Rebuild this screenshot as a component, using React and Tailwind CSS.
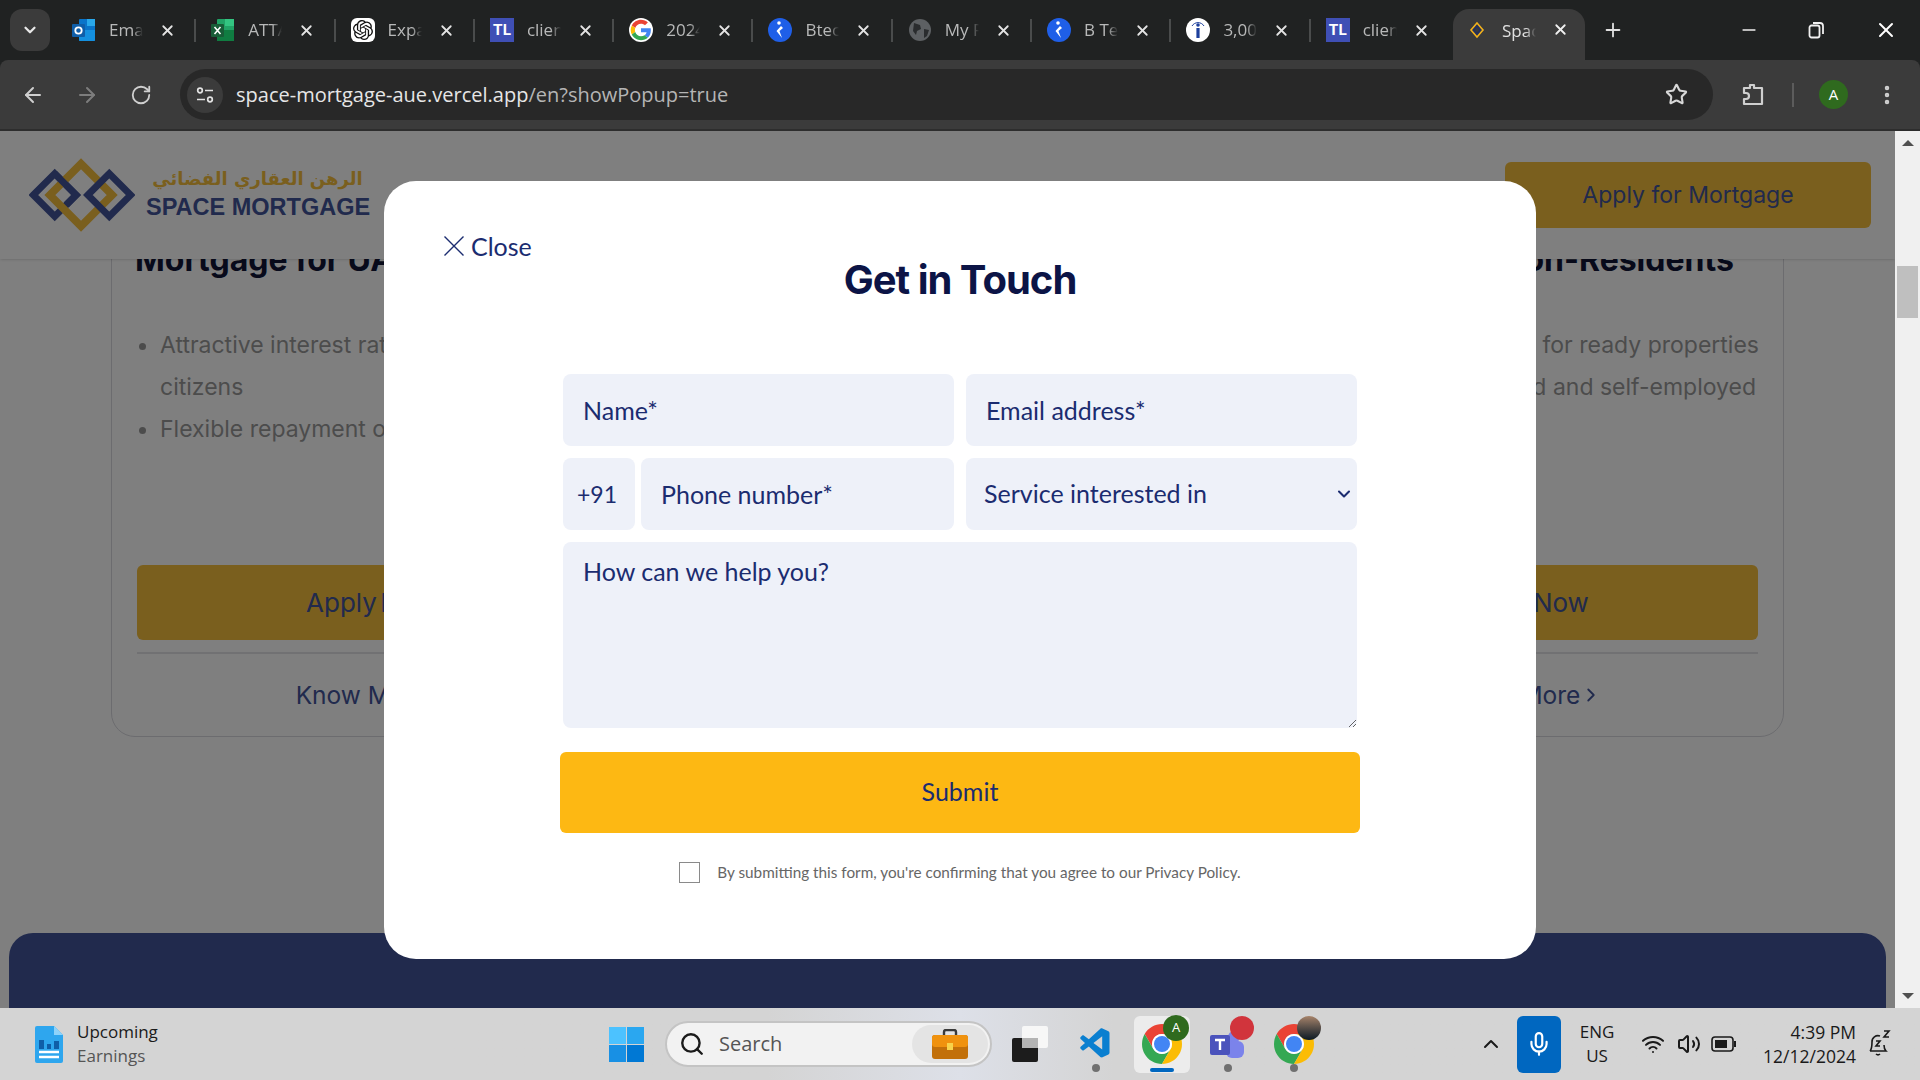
import React from 'react';
import {
  ArrowLeft, ArrowRight, RotateCw, Star, EllipsisVertical, ChevronDown, ChevronRight, ChevronUp,
  X, Plus, Minus, Search, Mic, Wifi, Volume2,
} from 'lucide-react';
import { SiOpenai } from 'react-icons/si';
import { VscVscode } from 'react-icons/vsc';

const ui = { fontFamily: '"Open Sans", "Noto Sans", sans-serif' };
const site = { fontFamily: 'Inter, "Noto Sans", sans-serif' };
const form = { fontFamily: 'Lato, "Noto Sans", sans-serif' };

function Outlook() {
  return (
    <svg width="24" height="24" viewBox="0 0 24 24">
      <rect x="7" y="1" width="16" height="22" rx="1" fill="#0a74c9" />
      <rect x="15" y="1" width="8" height="7" fill="#29a8ea" />
      <path d="M7 12l16 0v10a1 1 0 0 1-1 1H8a1 1 0 0 1-1-1z" fill="#1490df" />
      <rect x="0" y="6" width="13" height="13" rx="1" fill="#0f5ea8" />
      <circle cx="6.5" cy="12.5" r="3.2" fill="none" stroke="#fff" strokeWidth="1.8" />
    </svg>
  );
}

function Excel() {
  return (
    <svg width="24" height="24" viewBox="0 0 24 24">
      <rect x="6" y="1" width="17" height="22" rx="1" fill="#21a366" />
      <rect x="14" y="1" width="9" height="7" fill="#33c481" />
      <rect x="6" y="12" width="17" height="11" fill="#107c41" />
      <rect x="0" y="6" width="13" height="13" rx="1" fill="#185c37" />
      <path d="M3.5 9l6 7M9.5 9l-6 7" stroke="#fff" strokeWidth="1.6" />
    </svg>
  );
}

function OpenAi() {
  return (
    <div className="w-6 h-6 rounded-md bg-white flex items-center justify-center">
      <SiOpenai size={20} color="#111" />
    </div>
  );
}

function Tl() {
  return (
    <div className="w-6 h-6 bg-[#3f4fb5] flex items-center justify-center text-white text-[15px] font-bold" style={site}>
      TL
    </div>
  );
}

function Google() {
  return (
    <svg width="24" height="24" viewBox="-4 -4 56 56" className="rounded-full bg-white">
      <path fill="#EA4335" d="M24 9.5c3.54 0 6.71 1.22 9.21 3.6l6.85-6.85C35.9 2.38 30.47 0 24 0 14.62 0 6.51 5.38 2.56 13.22l7.98 6.19C12.43 13.72 17.74 9.5 24 9.5z" />
      <path fill="#4285F4" d="M46.98 24.55c0-1.57-.15-3.09-.38-4.55H24v9.02h12.94c-.58 2.96-2.26 5.48-4.78 7.18l7.73 6c4.51-4.18 7.09-10.36 7.09-17.65z" />
      <path fill="#FBBC05" d="M10.53 28.59c-.48-1.45-.76-2.99-.76-4.59s.27-3.14.76-4.59l-7.98-6.19C.92 16.46 0 20.12 0 24c0 3.88.92 7.54 2.56 10.78l7.97-6.19z" />
      <path fill="#34A853" d="M24 48c6.48 0 11.93-2.13 15.89-5.81l-7.73-6c-2.15 1.45-4.92 2.3-8.16 2.3-6.26 0-11.57-4.22-13.47-9.91l-7.98 6.19C6.51 42.62 14.62 48 24 48z" />
    </svg>
  );
}

function BlueK() {
  return (
    <svg width="24" height="24" viewBox="0 0 24 24">
      <circle cx="12" cy="12" r="12" fill="#1f5fe8" />
      <circle cx="11" cy="5" r="1.8" fill="#fff" />
      <path d="M13 8l-4.500 5 5.500 7-2.500-7 3.500-3z" fill="#fff" />
    </svg>
  );
}

function Globe() {
  return (
    <svg width="24" height="24" viewBox="0 0 24 24">
      <circle cx="12" cy="12" r="11" fill="#5d6063" />
      <path d="M6 5l6 2 1 4-4 2-1 4-3-4zM16 11l5 1-2 6-3 2z" fill="#2a2c2e" />
    </svg>
  );
}

function InfoIcon() {
  return (
    <svg width="24" height="24" viewBox="0 0 24 24">
      <circle cx="12" cy="12" r="12" fill="#fff" />
      <circle cx="12" cy="7" r="1.8" fill="#1d3f9c" />
      <rect x="10.400" y="10" width="3.200" height="10" fill="#1d3f9c" />
      <path d="M6 8a7 7 0 0 1 12 0" fill="none" stroke="#1d3f9c" strokeWidth="1" />
    </svg>
  );
}

function SpaceFav() {
  return (
    <svg width="24" height="24" viewBox="0 0 24 24">
      <path d="M12 5l6 7-6 7-6-7z" fill="#23305c" stroke="#f2b21b" strokeWidth="1.6" />
      <path d="M12 9.500l2.200 2.500-2.200 2.500-2.200-2.500z" fill="#3b3b3b" />
    </svg>
  );
}

const tabs = [
  { icon: <Outlook />, title: 'Email' },
  { icon: <Excel />, title: 'ATTACH' },
  { icon: <OpenAi />, title: 'Expand' },
  { icon: <Tl />, title: 'clients' },
  { icon: <Google />, title: '2024' },
  { icon: <BlueK />, title: 'Btech' },
  { icon: <Globe />, title: 'My Page' },
  { icon: <BlueK />, title: 'B Tech' },
  { icon: <InfoIcon />, title: '3,000' },
  { icon: <Tl />, title: 'clients' },
];

function Tab({ icon, title, last }) {
  return (
    <div className="w-[139.3px] h-[42px] flex items-center pl-[15px] relative shrink-0">
      <div className="w-6 h-6 shrink-0">{icon}</div>
      <div className="ml-[13px] w-[34px] overflow-hidden whitespace-nowrap text-[17px] text-[#b8b9b9] [mask-image:linear-gradient(to_right,black_70%,transparent)]">
        {title}
      </div>
      <X size={17} strokeWidth={2.5} color="#e3e3e3" className="ml-[16px] shrink-0" />
      {!last && <div className="absolute right-0 top-[10px] w-[2px] h-[23px] bg-[#4a4c4c]" />}
    </div>
  );
}

function TabStrip() {
  return (
    <div className="h-[60px] bg-[#202222] flex items-start pt-[9px] shrink-0" style={ui}>
      <div className="ml-[10px] w-10 h-[42px] rounded-xl bg-[#3b3b3b] flex items-center justify-center">
        <ChevronDown size={18} strokeWidth={3} color="#e8e8e8" />
      </div>
      <div className="ml-[7px] flex">
        {tabs.map((t, i) => (
          <Tab key={i} icon={t.icon} title={t.title} last={i === tabs.length - 1} />
        ))}
      </div>
      <div className="ml-[3px] w-[132px] h-[51px] rounded-t-2xl bg-[#3b3b3b] flex items-start pt-[9px] pl-[12px] shrink-0">
        <div className="w-6 h-6 shrink-0"><SpaceFav /></div>
        <div className="ml-[13px] w-[34px] overflow-hidden whitespace-nowrap text-[17px] text-[#e0e0e0] [mask-image:linear-gradient(to_right,black_70%,transparent)]">
          Space
        </div>
        <X size={17} strokeWidth={2.5} color="#f0f0f0" className="ml-[16px] mt-[3px] shrink-0" />
      </div>
      <Plus size={22} color="#e0e0e0" className="ml-[17px] mt-[10px] shrink-0" />
      <Minus size={20} color="#f0f0f0" className="ml-[115px] mt-[11px] shrink-0" />
      <svg width="20" height="20" viewBox="0 0 20 20" className="ml-[47px] mt-[11px] shrink-0" fill="none" stroke="#f0f0f0" strokeWidth="1.800">
        <rect x="3.500" y="5.500" width="10" height="12" rx="2" />
        <path d="M7 3h7a3 3 0 0 1 3 3v8" />
      </svg>
      <X size={24} color="#ffffff" className="ml-[48px] mt-[9px] shrink-0" />
    </div>
  );
}

function Toolbar() {
  return (
    <div className="h-[71px] bg-[#3b3b3b] border-b-2 border-[#2d2d2d] flex items-center shrink-0 rounded-t-lg" style={ui}>
      <ArrowLeft size={24} color="#cfcfcf" className="ml-[21px] shrink-0" />
      <ArrowRight size={24} color="#7d7d7d" className="ml-[30px] shrink-0" />
      <RotateCw size={22} color="#cfcfcf" className="ml-[31px] shrink-0" />
      <div className="ml-[28px] w-[1533px] h-[51px] rounded-full bg-[#282828] flex items-center pl-[7px] shrink-0">
        <div className="w-9 h-9 rounded-full bg-[#3b3b3b] flex items-center justify-center">
          <svg width="20" height="20" viewBox="0 0 20 20" fill="none" stroke="#e3e3e3" strokeWidth="1.700">
            <circle cx="5" cy="5.500" r="2.300" />
            <path d="M10 5.500h8M2 14.500h8" />
            <circle cx="15" cy="14.500" r="2.300" />
          </svg>
        </div>
        <div className="ml-[13px] text-[20px] text-[#e6e6e6] whitespace-nowrap">
          space-mortgage-aue.vercel.app<span className="text-[#b5b5b5]">/en?showPopup=true</span>
        </div>
        <Star size={23} strokeWidth={2.2} color="#d8d8d8" className="ml-auto mr-[25px] shrink-0" />
      </div>
      <svg width="26" height="26" viewBox="0 0 26 26" className="ml-[27px] shrink-0" fill="none" stroke="#cfcfcf" strokeWidth="2.200" strokeLinejoin="round">
        <path d="M4 6h6V3h4v3h8v16H4v-5h2a3 3 0 0 0 0-6H4z" />
      </svg>
      <div className="ml-[26px] w-[2px] h-[24px] bg-[#5c5c5c] shrink-0" />
      <div className="ml-[25px] w-[29px] h-[29px] rounded-full bg-[#2f6a1e] text-white text-[15px] flex items-center justify-center shrink-0">
        A
      </div>
      <EllipsisVertical size={24} strokeWidth={2.5} color="#cfcfcf" className="ml-[27px] shrink-0" />
    </div>
  );
}

function Logo() {
  return (
    <div className="flex items-center ml-[29px] -mt-1">
      <svg width="106" height="74" viewBox="0 0 108 76" className="shrink-0 mt-[3px]">
        <path d="M4 38L26 16 48 38 26 60z" fill="none" stroke="#42549a" strokeWidth="7" />
        <path d="M53 6L85 38 53 70 21 38z" fill="none" stroke="#f5be3c" strokeWidth="8" />
        <path d="M60 38L82 16 104 38 82 60z" fill="none" stroke="#42549a" strokeWidth="7" />
        <path d="M26 16L48 38 38 48" fill="none" stroke="#42549a" strokeWidth="7" />
      </svg>
      <div className="ml-[11px] w-[223px] flex flex-col">
        <div className="text-[18px] leading-[28px] font-bold text-[#f5be3c] text-center whitespace-nowrap" dir="rtl" style={{ fontFamily: '"DejaVu Sans", sans-serif' }}>
          الرهن العقاري الفضائي
        </div>
        <div className="text-[23.5px] leading-[28px] font-bold text-[#42549a] whitespace-nowrap" style={{ fontFamily: '"Liberation Sans", sans-serif' }}>
          SPACE MORTGAGE
        </div>
      </div>
    </div>
  );
}

function Card({ title, bullets }) {
  return (
    <div className="border border-[#d8d8de] rounded-b-3xl px-[25px] pt-[20px] h-[518px] flex flex-col">
      <h3 className="-ml-[2px] text-[32px] leading-10 font-bold text-[#101536] whitespace-nowrap">{title}</h3>
      <ul className="mt-[44px] pl-[23px] list-disc text-[23px] leading-[42px] text-[#999999] whitespace-nowrap h-[241px] marker:text-[#999999]">
        {bullets.map((b, i) => (
          <li key={i}>
            {b.map((line, j) => (
              <div key={j}>{line}</div>
            ))}
          </li>
        ))}
      </ul>
      <button className="h-[75px] w-full rounded-md bg-[#f5be3c] text-[26px] [word-spacing:-4px] text-[#42549a]">Apply Now</button>
      <div className="mt-[12px] border-t-2 border-[#e2e2e6] flex items-center justify-center pl-[3px] text-[24.5px] text-[#42549a] h-[84px]">
        Know More <ChevronRight size={22} />
      </div>
    </div>
  );
}

function Page() {
  return (
    <div className="flex-1 flex flex-col overflow-hidden bg-white" style={site}>
      <header className="relative z-10 h-[128px] bg-white shadow-sm flex items-center justify-between shrink-0">
        <Logo />
        <button className="mr-[24px] w-[366px] h-[66px] rounded-md bg-[#f5be3c] text-[23px] text-[#42549a]">
          Apply for Mortgage
        </button>
      </header>
      <section className="-mt-[40px] mx-[111px] grid grid-cols-3 gap-[56px]">
        <Card
          title="Mortgage for UAE Nationals"
          bullets={[['Attractive interest rates for UAE', 'citizens'], ['Flexible repayment options']]}
        />
        <div />
        <Card
          title="Mortgage for Non-Residents"
          bullets={[['Up to 50% financing for ready properties'], ['Open to both salaried and self-employed']]}
        />
      </section>
      <div className="mt-auto mx-[9px] h-[75px] rounded-t-3xl bg-[#42549a] shrink-0" />
    </div>
  );
}

const fieldClass = 'h-[72px] rounded-lg bg-[#eef1f9] text-[#1b2c70] outline-none placeholder:text-[#1b2c70]';

function Modal() {
  return (
    <div className="absolute inset-0 z-20 bg-black/50 flex" style={site}>
      <div className="mt-[50px] ml-[384px] w-[1152px] h-[778px] rounded-[32px] bg-white relative">
        <button className="absolute left-[60px] top-[49px] flex items-center gap-[7px] text-[25px] leading-8 text-[#1b2c70]" style={form}>
          <svg width="20" height="20" viewBox="0 0 20 20" stroke="currentColor" strokeWidth="1.400">
            <path d="M0.500 0.500L19.500 19.500M19.500 0.500L0.500 19.500" />
          </svg>
          Close
        </button>
        <h2 className="pt-[75px] text-center text-[40px] leading-[48px] font-bold text-[#0c1446] tracking-tight">
          Get in Touch
        </h2>
        <form className="mt-[70px] mx-[179px] flex flex-col gap-3" style={form}>
          <div className="grid grid-cols-2 gap-3">
            <input className={`${fieldClass} text-[25px] px-5 w-full`} placeholder="Name*" />
            <input className={`${fieldClass} text-[25px] px-5 w-full`} placeholder="Email address*" />
          </div>
          <div className="grid grid-cols-2 gap-3">
            <div className="flex gap-[6px]">
              <input className={`${fieldClass} text-[23px] w-[72px] px-[14px] shrink-0`} defaultValue="+91" />
              <input className={`${fieldClass} text-[25px] px-5 w-full min-w-0`} placeholder="Phone number*" />
            </div>
            <div className="relative">
              <select className={`${fieldClass} text-[25px] appearance-none px-[18px] w-full`} defaultValue="">
                <option value="">Service interested in</option>
              </select>
              <ChevronDown size={20} strokeWidth={2.5} color="#1b2c70" className="absolute right-[3px] top-[26px] pointer-events-none" />
            </div>
          </div>
          <textarea className={`${fieldClass} text-[25px] h-[186px] px-5 py-[15px] w-full leading-7`} placeholder="How can we help you?" />
          <button type="button" className="-mx-[3px] mt-3 h-[81px] pb-[2px] rounded-md bg-[#fdb813] text-[25px] text-[#1b2c70]">
            Submit
          </button>
        </form>
        <div className="mt-[28px] flex items-center justify-center" style={form}>
          <input type="checkbox" className="appearance-none w-[21px] h-[21px] border-[1.5px] border-[#8a8a8a] bg-white" />
          <span className="ml-[17px] text-[15.3px] text-[#666]">
            By submitting this form, you're confirming that you agree to our Privacy Policy.
          </span>
        </div>
      </div>
    </div>
  );
}

function Scrollbar() {
  return (
    <div className="w-[25px] bg-[#f0f0f0] flex flex-col items-center shrink-0 relative z-30">
      <div className="mt-[9px] w-0 h-0 border-x-[6px] border-x-transparent border-b-[6px] border-b-[#505050]" />
      <div className="mt-[120px] w-[21px] h-[52px] bg-[#bfbfbf]" />
      <div className="mt-auto mb-[9px] w-0 h-0 border-x-[6px] border-x-transparent border-t-[6px] border-t-[#505050]" />
    </div>
  );
}

function ChromeIcon() {
  return (
    <svg width="40" height="40" viewBox="4 4 40 40">
      <path fill="#ea4335" d="M6.680 14A20 20 0 0 1 41.320 14H24A10 10 0 0 0 15.340 29z" />
      <path fill="#34a853" d="M6.680 14L15.340 29A10 10 0 0 0 32.660 29L24 44A20 20 0 0 1 6.680 14z" />
      <path fill="#fbbc05" d="M41.320 14H24A10 10 0 0 1 32.660 29L24 44A20 20 0 0 0 41.320 14z" />
      <circle cx="24" cy="24" r="10" fill="#fff" />
      <circle cx="24" cy="24" r="8" fill="#4285f4" />
    </svg>
  );
}

function TaskIcon({ children, active, dot, badge }) {
  return (
    <div className={`relative w-[56px] h-[57px] flex items-center justify-center rounded-md shrink-0 ${active ? 'bg-[#ececec]' : ''}`}>
      {children}
      {badge}
      {dot && <div className="absolute bottom-[1px] left-[24px] w-2 h-2 rounded-full bg-[#707070]" />}
      {active && <div className="absolute bottom-[1px] left-[16px] w-6 h-1 rounded-full bg-[#0067c0]" />}
    </div>
  );
}

function Taskbar() {
  return (
    <div className="h-[72px] bg-gradient-to-r from-[#d4d4d4] from-40% via-[#dde0e8] via-50% to-[#d4d4d4] to-58% flex items-center shrink-0 text-[#1a1a1a] relative z-30" style={ui}>
      <div className="w-[609px] pl-[35px] flex items-center shrink-0">
        <svg width="28" height="37" viewBox="0 0 28 37">
          <path d="M2 0h17l9 9v26a2 2 0 0 1-2 2H2a2 2 0 0 1-2-2V2a2 2 0 0 1 2-2z" fill="#2ea6ee" />
          <path d="M19 0l9 9h-9z" fill="#8ed3fa" />
          <rect x="4" y="14" width="5" height="9" fill="#0f5ea8" />
          <rect x="12" y="18" width="4" height="5" fill="#0f5ea8" />
          <rect x="19" y="15" width="5" height="8" fill="#0f5ea8" />
          <path d="M4 26h20M4 31h20" stroke="#fff" strokeWidth="2.400" />
        </svg>
        <div className="ml-[14px] text-[17px] leading-6">
          <div>Upcoming</div>
          <div className="text-[#555]">Earnings</div>
        </div>
      </div>

      <svg width="35" height="35" viewBox="0 0 35 35" className="shrink-0">
        <rect width="17" height="17" fill="#4cc2ff" />
        <rect x="18" width="17" height="17" fill="#2aa7f0" />
        <rect y="18" width="17" height="17" fill="#1890e4" />
        <rect x="18" y="18" width="17" height="17" fill="#0078d4" />
      </svg>

      <div className="ml-[21px] w-[327px] h-[46px] rounded-full bg-[#f2f2f2] border-2 border-[#c4c4c4] flex items-center pl-[12px] shrink-0">
        <Search size={26} strokeWidth={2.2} color="#1a1a1a" />
        <span className="ml-[14px] text-[20px] text-[#555]">Search</span>
        <div className="ml-auto mr-[2px] w-[76px] h-[38px] rounded-full bg-[#e4e4e4] flex items-center justify-center">
          <svg width="36" height="30" viewBox="0 0 36 30">
            <path d="M12 6V3a2 2 0 0 1 2-2h8a2 2 0 0 1 2 2v3" fill="none" stroke="#3a3a3a" strokeWidth="2.400" />
            <rect y="6" width="36" height="24" rx="3" fill="#c2700a" />
            <rect y="6" width="36" height="12" rx="3" fill="#f0920e" />
            <rect x="15" y="14" width="6" height="7" fill="#f8d34a" />
          </svg>
        </div>
      </div>

      <div className="ml-[10px] flex gap-[10px]">
        <TaskIcon>
          <svg width="36" height="36" viewBox="0 0 36 36">
            <rect x="0" y="12" width="26" height="24" rx="2" fill="#1c1c1c" />
            <rect x="10" y="0" width="26" height="22" rx="2" fill="#f7f7f7" />
            <rect x="10" y="12" width="16" height="10" fill="#b4b4b4" />
          </svg>
        </TaskIcon>
        <TaskIcon dot>
          <VscVscode size={36} color="#0a7fd0" />
        </TaskIcon>
        <TaskIcon
          active
          badge={
            <div className="absolute -top-[1px] right-[1px] w-[26px] h-[26px] rounded-full bg-[#2f6a1e] text-[13px] text-white flex items-center justify-center">
              A
            </div>
          }
        >
          <ChromeIcon />
        </TaskIcon>
        <TaskIcon
          dot
          badge={<div className="absolute top-0 right-[2px] w-6 h-6 rounded-full bg-[#d1343c]" />}
        >
          <svg width="36" height="36" viewBox="0 0 36 36">
            <circle cx="24" cy="11" r="6" fill="#7b83eb" />
            <rect x="16" y="15" width="18" height="17" rx="6" fill="#7b83eb" />
            <rect x="0" y="9" width="20" height="20" rx="2" fill="#4b53bc" />
            <path d="M5 14h10M10 14v10" stroke="#fff" strokeWidth="2.400" />
          </svg>
        </TaskIcon>
        <TaskIcon
          dot
          badge={<div className="absolute top-0 right-[1px] w-6 h-6 rounded-full bg-gradient-to-b from-[#a8846a] to-[#0c1a24]" />}
        >
          <ChromeIcon />
        </TaskIcon>
      </div>

      <ChevronUp size={24} strokeWidth={2} color="#1a1a1a" className="ml-[157px] shrink-0" />
      <div className="ml-[14px] w-[44px] h-[57px] rounded-md bg-[#0067c0] flex items-center justify-center shrink-0">
        <Mic size={26} color="#ffffff" />
      </div>
      <div className="ml-[14px] w-[44px] text-center text-[17px] leading-[24px] shrink-0">
        <div>ENG</div>
        <div>US</div>
      </div>
      <Wifi size={24} className="ml-[22px] shrink-0" />
      <Volume2 size={24} className="ml-[12px] shrink-0" />
      <svg width="26" height="16" viewBox="0 0 26 16" className="ml-[10px] shrink-0">
        <rect x="1" y="1" width="21" height="14" rx="3" fill="none" stroke="#1a1a1a" strokeWidth="1.600" />
        <rect x="4" y="4" width="12" height="8" fill="#1a1a1a" />
        <rect x="23" y="5" width="2" height="6" fill="#1a1a1a" />
      </svg>
      <div className="ml-auto text-right text-[17.5px] leading-[24px] shrink-0">
        <div>4:39 PM</div>
        <div>12/12/2024</div>
      </div>
      <svg width="26" height="30" viewBox="0 0 26 30" className="ml-[10px] mr-[28px] shrink-0" fill="none" stroke="#1a1a1a" strokeWidth="1.600">
        <path d="M4 22c2-2 2-5 2-9a6 6 0 0 1 8-6M4 22h16c-1.500-1.500-2-3-2-6M10 25a3 3 0 0 0 4 0" />
        <path d="M10 12h4l-4 5h4M18 2h5l-5 6h5" />
      </svg>
    </div>
  );
}

export default function App() {
  return (
    <div className="w-[1920px] h-[1080px] flex flex-col overflow-hidden bg-[#202222]">
      <TabStrip />
      <Toolbar />
      <div className="flex-1 flex min-h-0">
        <div className="relative flex-1 flex min-w-0 overflow-hidden">
          <Page />
          <Modal />
        </div>
        <Scrollbar />
      </div>
      <Taskbar />
    </div>
  );
}
